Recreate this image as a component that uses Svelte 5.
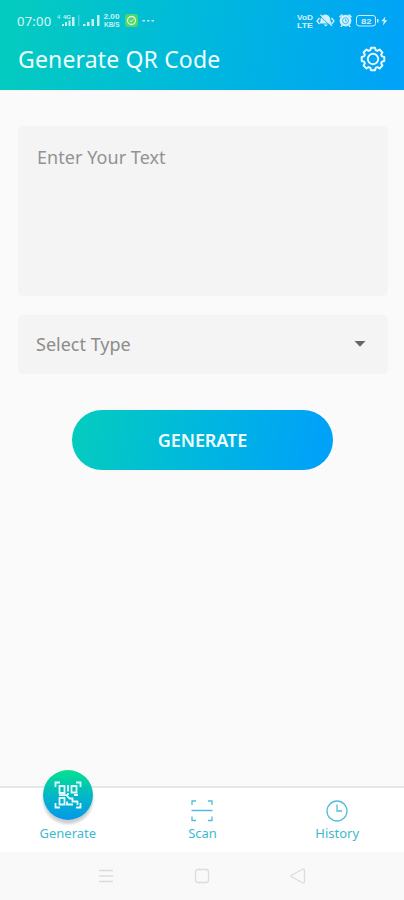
<script lang="ts">
  let text = $state("");

  // outline of the settings wheel: eight rounded teeth
  const gear = gearPath(8, 9.3, 11.5);

  function gearPath(teeth: number, inner: number, outer: number) {
    const step = (Math.PI * 2) / teeth;
    const points: string[] = [];
    for (let i = 0; i < teeth; i++) {
      const mid = i * step;
      const corners = [
        [inner, -0.36],
        [outer, -0.23],
        [outer, 0.23],
        [inner, 0.36],
      ];
      for (const [r, offset] of corners) {
        const a = mid + offset * step;
        points.push(`${(13 + r * Math.cos(a)).toFixed(2)} ${(13 + r * Math.sin(a)).toFixed(2)}`);
      }
    }
    return `M${points.join("L")}Z`;
  }
</script>

<div class="screen">
  <header>
    <div class="status">
      <span class="time">07:00</span>
      <svg class="left" width="102" height="16" viewBox="56 13 102 16" fill="#fff">
        <g opacity=".78">
          <text x="57" y="19" font-size="6">4</text>
          <text x="63" y="19" font-size="6" font-weight="700">4G</text>
          <path d="M62 24h2v2h-2zM65 22h2v4h-2zM68.500 20.500h2v5.500h-2zM72 17h2.500v9H72z" />
          <path opacity=".35" d="M78 15h1.500v11H78z" />
          <path d="M83 24h2.500v2H83zM87 22h2.500v4H87zM91.500 19h2.500v7h-2.500zM97 15h2.500v11H97z" />
          <text x="103.500" y="19.300" font-size="6.500" font-weight="700" textLength="16" lengthAdjust="spacingAndGlyphs">2.00</text>
          <text x="104" y="26.800" font-size="6.500" font-weight="700" textLength="15.500" lengthAdjust="spacingAndGlyphs">KB/S</text>
        </g>
        <rect x="125" y="14" width="13" height="13" rx="3" fill="#4dd76b" />
        <circle cx="131.500" cy="20.500" r="4" fill="none" stroke="#e2fbd5" stroke-width="1.300" />
        <path d="m129.700 20.500 1.400 1.400 2.300-2.700" fill="none" stroke="#e2fbd5" />
        <path opacity=".75" d="M142.500 20h2.500v1.500h-2.500zM147 20h2.500v1.500H147zM151.500 20h2.500v1.500h-2.500z" />
      </svg>
      <svg class="right" width="94" height="16" viewBox="296 13 94 16" fill="#fff" opacity=".82">
        <text x="297" y="19.500" font-size="6.800" font-weight="700" textLength="16" lengthAdjust="spacingAndGlyphs">VoD</text>
        <text x="297" y="27.500" font-size="6.800" font-weight="700" textLength="16" lengthAdjust="spacingAndGlyphs">LTE</text>
        <path d="m319.500 18-2.500 3 2.500 3M331.500 18l2.500 3-2.500 3" fill="none" stroke="#fff" stroke-width="1.300" />
        <path d="M325.500 14.500c-3.500.5-5 3-5 6.500l-1 2.500h12l-1-2.500c0-3.500-1.500-6-5-6.500zM323.500 24.500h4.500l-2.200 2z" />
        <path d="m319.500 15.500 11.500 11" stroke="#08afe9" stroke-width="1" />
        <path d="m320.500 14.800 11.500 11" stroke="#fff" stroke-width="1.200" />
        <path d="m339 16.500 3-2.500 1 1-3 2.700zM352 16.500 349 14l-1 1 3 2.700zM341.500 25l-1.500 2h1.500l1.500-1.500zM349.500 25l1.500 2h-1.500l-1.500-1.500z" />
        <circle cx="345.500" cy="20.700" r="5.900" />
        <circle cx="345.500" cy="20.700" r="3" fill="none" stroke="#06aeed" stroke-width=".7" />
        <path d="M345.500 19v2h1.500" fill="none" stroke="#06aeed" stroke-width=".7" />
        <rect x="356.500" y="15.500" width="19" height="10.500" rx="2.500" fill="none" stroke="#fff" />
        <path d="M377 19h1.500v3.500H377z" />
        <text x="361" y="23.700" font-size="8" font-weight="700" textLength="10.500" lengthAdjust="spacingAndGlyphs">82</text>
        <path d="m385.500 16.500-4.300 4.800h2.600l-1 4.200 4.600-5.300h-2.700z" />
      </svg>
    </div>
    <div class="title-row">
      <h1>Generate QR Code</h1>
      <button class="settings" aria-label="Settings">
        <svg width="26" height="26" viewBox="0 0 26 26" fill="none" stroke="#effaff" stroke-width="1.900" stroke-linejoin="round">
          <path d={gear} />
          <circle cx="13" cy="13" r="5.200" />
        </svg>
      </button>
    </div>
  </header>

  <main>
    <textarea placeholder="Enter Your Text" bind:value={text}></textarea>
    <button class="select">
      <span>Select Type</span>
      <svg width="12" height="6" viewBox="0 0 12 6"><path d="M.5 0h11L6 5.700z" fill="#666" /></svg>
    </button>
    <button class="generate">GENERATE</button>
  </main>

  <nav>
    <button class="tab">
      <span class="bubble">
        <svg width="28" height="28" viewBox="0 0 28 28" fill="none" stroke="#e5fbff" stroke-width="1.800">
          <path d="M1.500 6V1.500H6M22 1.500h4.500V6M1.500 22v4.500H6M22 26.500h4.500V22" />
          <path d="M5.500 5h5v7h-5zM17.500 5h5v6.500h-5zM5.500 17h5v6.500h-5z" />
          <path d="M14 4v6.500M5 14.200h7.500l3 3.300h3v3H24M14 12v2M20 14h4M13 20.500v3h6M23.500 20v4" />
        </svg>
      </span>
      <span class="label">Generate</span>
    </button>
    <button class="tab">
      <svg width="24" height="24" viewBox="0 0 24 24" fill="none" stroke="#51bddb" stroke-width="1.300">
        <path d="M2 6V2h4M18 2h4v4M2 17.500v4h4M18 21.500h4v-4M1.500 11.500h21" />
      </svg>
      <span class="label">Scan</span>
    </button>
    <button class="tab">
      <svg width="24" height="24" viewBox="0 0 24 24" fill="none" stroke="#51bddb" stroke-width="1.300">
        <circle cx="12" cy="12" r="10" />
        <path d="M12 5.500V12h5" />
      </svg>
      <span class="label">History</span>
    </button>
  </nav>

  <footer>
    <svg width="16" height="16" viewBox="0 0 16 16"><path d="M1 2.500h14M1 8h14M1 13.500h14" /></svg>
    <svg width="16" height="16" viewBox="0 0 16 16"><rect x="1.500" y="1.500" width="13" height="13" rx="2.500" /></svg>
    <svg width="16" height="16" viewBox="0 0 16 16"><path d="M1.500 7.200 12.500 1.300q2-.8 2 1v11.400q0 1.800-2 1L1.500 8.800q-1-.8 0-1.600z" /></svg>
  </footer>
</div>

<style>
  :global(body) {
    margin: 0;
  }

  .screen {
    display: flex;
    flex-direction: column;
    width: 404px;
    height: 900px;
    background: #fafafa;
    font-family: "Noto Sans", "Open Sans", sans-serif;
  }

  button {
    border: 0;
    padding: 0;
    background: none;
    font-family: inherit;
  }

  svg {
    display: block;
    flex: none;
  }

  header {
    box-sizing: border-box;
    height: 90px;
    padding-top: 13px;
    background: linear-gradient(100deg, #04cbc0 4%, #00b9dc 48%, #00a3f7 97%);
    color: #effdff;
  }

  .status {
    display: flex;
    height: 16px;
    padding: 0 14px 0 17px;
  }

  .status text {
    font-family: "Liberation Sans", sans-serif;
  }

  .time {
    width: 39px;
    font-size: 13px;
    line-height: 16px;
    letter-spacing: 0.25px;
    opacity: 0.9;
  }

  .right {
    margin-left: auto;
  }

  .title-row {
    display: flex;
    align-items: center;
    justify-content: space-between;
    height: 60px;
    padding: 0 18px;
  }

  h1 {
    margin: 0;
    font-size: 23px;
    font-weight: 400;
    line-height: 30px;
    letter-spacing: 0.15px;
  }

  main {
    display: flex;
    flex: 1;
    flex-direction: column;
    padding: 36px 16px 0 18px;
  }

  textarea {
    box-sizing: border-box;
    height: 170px;
    padding: 19px;
    border: 0;
    border-radius: 5px;
    background: #f4f4f4;
    font: 18px/25px "Noto Sans", "Open Sans", sans-serif;
    letter-spacing: 0.05px;
    resize: none;
  }

  textarea::placeholder {
    color: #929292;
  }

  .select {
    display: flex;
    align-items: center;
    justify-content: space-between;
    box-sizing: border-box;
    height: 59px;
    margin-top: 19px;
    padding: 0 22px 2px 18px;
    border-radius: 5px;
    background: #f4f4f4;
    color: #8c8c8c;
    font-size: 18px;
  }

  .generate {
    align-self: center;
    width: 261px;
    height: 60px;
    margin: 36px 1px 0 0;
    border-radius: 30px;
    background: linear-gradient(100deg, #04cbc0 4%, #00b7df 50%, #00a2f7 92%);
    color: #effdff;
    font-size: 18px;
    font-weight: 600;
    letter-spacing: -0.1px;
  }

  nav {
    display: grid;
    grid-template-rows: 64px;
    grid-template-columns: repeat(3, 1fr);
    height: 64px;
    border-top: 2px solid #e5e7e7;
    background: #fff;
  }

  .tab {
    display: flex;
    flex-direction: column;
    align-items: center;
    justify-content: flex-end;
    padding: 0 0 10px 1px;
    color: #3eb9cf;
  }

  .label {
    margin-top: 1px;
    font-size: 13px;
    line-height: 18px;
  }

  .bubble {
    display: grid;
    flex: none;
    place-items: center;
    width: 50px;
    height: 50px;
    margin-bottom: 3px;
    border-radius: 50%;
    background: linear-gradient(#06e18f, #02b8c5 50%, #0598e8);
    box-shadow: 0 4px 3px #0003;
  }

  footer {
    display: flex;
    align-items: center;
    justify-content: space-between;
    height: 48px;
    padding: 0 98px;
    background: #f9f9f9;
  }

  footer path,
  footer rect {
    fill: none;
    stroke: #dcdcdc;
    stroke-width: 1.3;
  }
</style>
